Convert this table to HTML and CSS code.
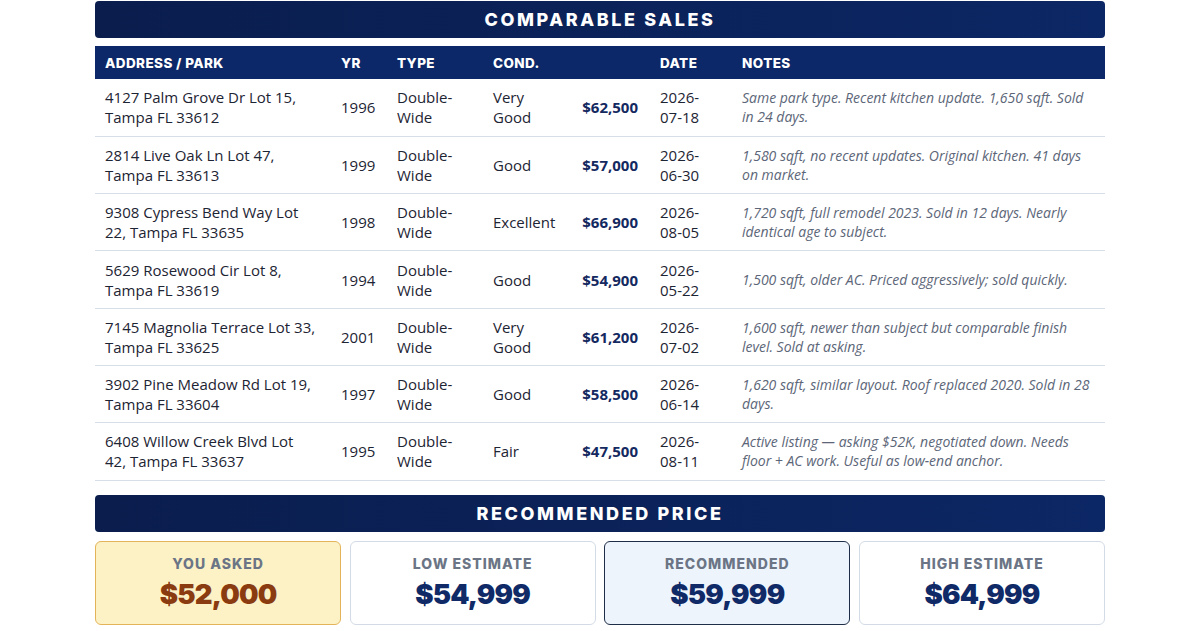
FILE: index.html
```html
<!DOCTYPE html>
<html lang="en">
<head>
<meta charset="utf-8">
<title>Comparable Sales</title>
<link rel="stylesheet" href="styles.css">
</head>
<body>
<main class="page">
  <h2 class="banner">COMPARABLE SALES</h2>
  <table class="comps">
    <colgroup>
      <col class="c-addr"><col class="c-yr"><col class="c-type"><col class="c-cond"><col class="c-price"><col class="c-date"><col class="c-notes">
    </colgroup>
    <thead>
      <tr><th>ADDRESS / PARK</th><th>YR</th><th>TYPE</th><th>COND.</th><th></th><th>DATE</th><th>NOTES</th></tr>
    </thead>
    <tbody>
      <tr><td class="addr">4127 Palm Grove Dr Lot 15, Tampa FL 33612</td><td>1996</td><td>Double-Wide</td><td>Very Good</td><td class="price">$62,500</td><td>2026-07-18</td><td class="notes">Same park type. Recent kitchen update. 1,650 sqft. Sold in 24 days.</td></tr>
      <tr><td class="addr">2814 Live Oak Ln Lot 47, Tampa FL 33613</td><td>1999</td><td>Double-Wide</td><td>Good</td><td class="price">$57,000</td><td>2026-06-30</td><td class="notes">1,580 sqft, no recent updates. Original kitchen. 41 days on market.</td></tr>
      <tr><td class="addr">9308 Cypress Bend Way Lot 22, Tampa FL 33635</td><td>1998</td><td>Double-Wide</td><td>Excellent</td><td class="price">$66,900</td><td>2026-08-05</td><td class="notes">1,720 sqft, full remodel 2023. Sold in 12 days. Nearly identical age to subject.</td></tr>
      <tr><td class="addr">5629 Rosewood Cir Lot 8, Tampa FL 33619</td><td>1994</td><td>Double-Wide</td><td>Good</td><td class="price">$54,900</td><td>2026-05-22</td><td class="notes">1,500 sqft, older AC. Priced aggressively; sold quickly.</td></tr>
      <tr><td class="addr">7145 Magnolia Terrace Lot 33, Tampa FL 33625</td><td>2001</td><td>Double-Wide</td><td>Very Good</td><td class="price">$61,200</td><td>2026-07-02</td><td class="notes">1,600 sqft, newer than subject but comparable finish level. Sold at asking.</td></tr>
      <tr><td class="addr">3902 Pine Meadow Rd Lot 19, Tampa FL 33604</td><td>1997</td><td>Double-Wide</td><td>Good</td><td class="price">$58,500</td><td>2026-06-14</td><td class="notes">1,620 sqft, similar layout. Roof replaced 2020. Sold in 28 days.</td></tr>
      <tr><td class="addr">6408 Willow Creek Blvd Lot 42, Tampa FL 33637</td><td>1995</td><td>Double-Wide</td><td>Fair</td><td class="price">$47,500</td><td>2026-08-11</td><td class="notes">Active listing — asking $52K, negotiated down. Needs floor + AC work. Useful as low-end anchor.</td></tr>
    </tbody>
  </table>

  <h2 class="banner banner-price">RECOMMENDED PRICE</h2>
  <section class="cards">
    <div class="card card-asked"><div class="label">YOU ASKED</div><div class="value">$52,000</div></div>
    <div class="card"><div class="label">LOW ESTIMATE</div><div class="value">$54,999</div></div>
    <div class="card card-rec"><div class="label">RECOMMENDED</div><div class="value">$59,999</div></div>
    <div class="card"><div class="label">HIGH ESTIMATE</div><div class="value">$64,999</div></div>
  </section>
</main>
</body>
</html>
```

FILE: styles.css
```css
* { box-sizing: border-box; }
html, body { margin: 0; padding: 0; background: #ffffff; }
body { font-family: "Open Sans", "Liberation Sans", sans-serif; color: #1c2230; }

.page {
  width: 1010px;
  margin: 0 auto;
  padding-top: 1px;
}

.banner {
  margin: 0;
  height: 37px;
  display: flex;
  align-items: center;
  justify-content: center;
  border-radius: 4px;
  background: linear-gradient(90deg, #0a1d4d 0%, #0c2765 100%);
  color: #ffffff;
  font-family: "Inter", "Liberation Sans", sans-serif;
  font-weight: 800;
  font-size: 18px;
  letter-spacing: 2.6px;
}

.comps {
  width: 100%;
  margin-top: 8px;
  border-collapse: collapse;
  table-layout: fixed;
}
.c-addr { width: 236px; }
.c-yr { width: 56px; }
.c-type { width: 96px; }
.c-cond { width: 89px; }
.c-price { width: 78px; }
.c-date { width: 82px; }

.comps th {
  background: #0c2868;
  color: #ffffff;
  text-align: left;
  font-family: "Inter", "Liberation Sans", sans-serif;
  font-weight: 800;
  font-size: 13.5px;
  letter-spacing: 0.4px;
  height: 33px;
  padding: 0 10px;
}

.comps td {
  padding: 8px 12px 8px 10px;
  font-size: 15px;
  line-height: 20px;
  vertical-align: middle;
  border-bottom: 1.5px solid #d6dee8;
  color: #1d2433;
}
.comps td.addr { padding-right: 14px; }
.comps tbody tr { height: 57.3px; }

.comps td.price {
  text-align: right;
  font-weight: 700;
  color: #13295f;
}
.comps td.notes {
  font-style: italic;
  font-size: 14px;
  line-height: 19px;
  color: #5c6678;
}

.banner-price { margin-top: 14px; }

.cards {
  display: grid;
  grid-template-columns: repeat(4, 1fr);
  gap: 8.5px;
  margin-top: 9px;
}
.card {
  height: 84px;
  border: 1.5px solid #d3dbe6;
  border-radius: 6px;
  background: #ffffff;
  display: flex;
  flex-direction: column;
  align-items: center;
  padding-top: 13px;
}
.card-asked { background: #fdf1c6; border-color: #e3b45a; }
.card-rec { background: #eef4fc; border-color: #1f2e48; }

.label {
  font-family: "Inter", "Liberation Sans", sans-serif;
  font-weight: 800;
  font-size: 14px;
  letter-spacing: 1px;
  color: #6b7585;
  line-height: 18px;
}
.value {
  margin-top: 3px;
  font-family: "Inter", "Liberation Sans", sans-serif;
  font-weight: 900;
  font-size: 27.5px;
  line-height: 36px;
  color: #0f2a66;
  letter-spacing: -0.8px;
}
.card-asked .value { color: #8a3c10; }
```
